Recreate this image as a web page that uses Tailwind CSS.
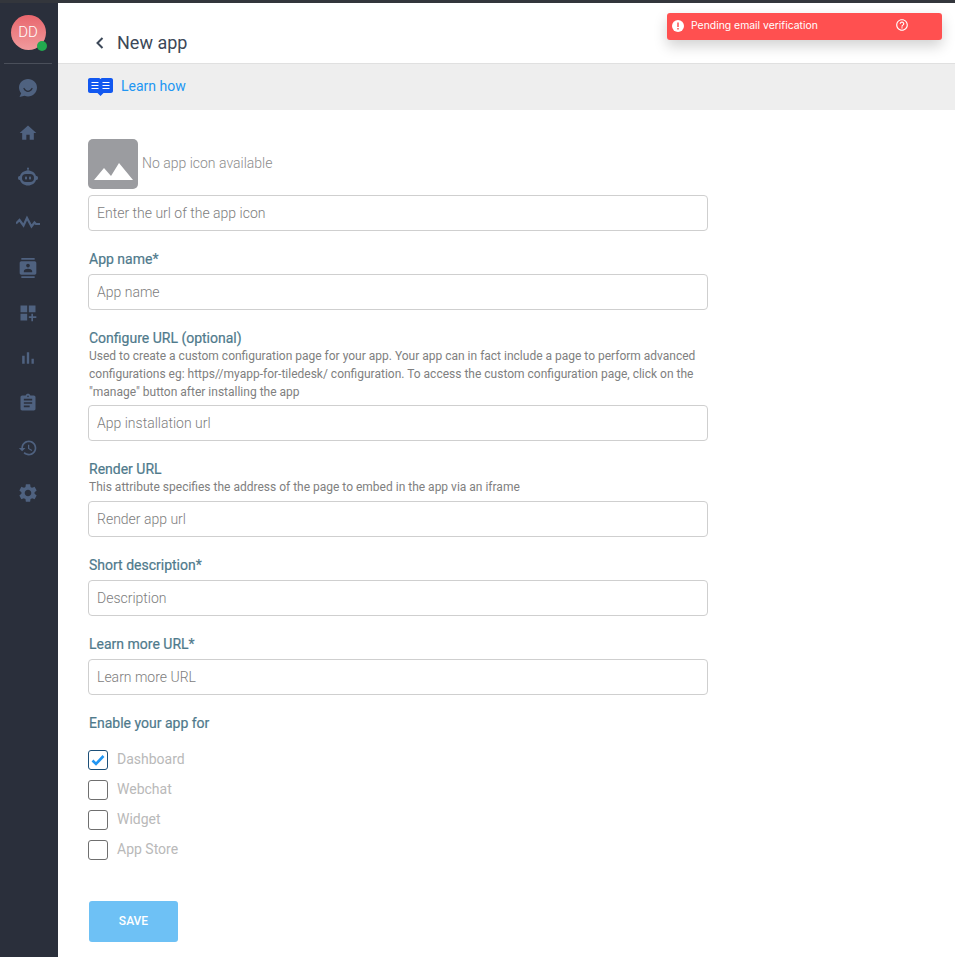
<!DOCTYPE html>
<html lang="en">
<head>
    <meta charset="UTF-8">
    <script src="https://cdn.jsdelivr.net/npm/@tailwindcss/browser@4"></script>
    <title>New app</title>
</head>
<body class="font-[Roboto,sans-serif]">
<div class="relative w-[955px] h-[957px] overflow-hidden bg-white flex flex-col">
    <div class="h-[3px] bg-[#33363c] shrink-0"></div>

    <div class="flex flex-1 min-h-0">
        <!-- sidebar -->
        <aside class="w-[58px] shrink-0 bg-[#2a2f3b] flex flex-col items-center">
            <div class="w-full h-[60px] shrink-0 flex items-center justify-center pr-[2px]">
                <div class="relative w-[35px] h-[35px] mt-[-2px] rounded-full bg-gradient-to-b from-[#e8666d] to-[#f09a9d] flex items-center justify-center text-white text-[15px] font-light">
                    DD
                    <span class="absolute right-[-1px] bottom-[-1px] w-[10px] h-[10px] rounded-full bg-[#22a94f]"></span>
                </div>
            </div>
            <div class="w-[48px] h-px bg-[#4a4f5a] shrink-0 mr-[2px]"></div>
            <nav class="flex flex-col items-center gap-[21px] mt-[12px] mr-[2px] text-[#4f6280]">
                <svg class="w-6 h-6" viewBox="0 0 24 24" fill="currentColor"><path d="M12 3c-5 0-9 3.700-9 8.500 0 2.200.8 4.200 2.200 5.700L3.500 21l5-1.200c1.100.4 2.300.7 3.500.7 5 0 9-3.800 9-8.900S17 3 12 3z"/><path d="M8 12.500c1 2 2.500 2.800 4 2.800s3-.8 4-2.800" fill="none" stroke="#2a2f3b" stroke-width="1.300" stroke-linecap="round"/></svg>
                <svg class="w-6 h-6 p-[2px]" viewBox="0 0 24 24" fill="currentColor"><path d="M10 20v-6h4v6h5v-8h3L12 3 2 12h3v8z"/></svg>
                <svg class="w-6 h-6" viewBox="0 0 24 24" fill="currentColor"><path d="M11.500 2h1v3h-1z"/><circle cx="12" cy="2.500" r="1"/><path d="M12 4.500c4 0 7 2.300 8 5.500h.5c1 0 1.500.8 1.500 2s-.5 2-1.500 2H20c-1 3.200-4 5.500-8 5.500S5 17.200 4 14h-.5C2.500 14 2 13.200 2 12s.5-2 1.500-2H4c1-3.200 4-5.500 8-5.500z"/><rect x="6" y="8" width="12" height="8" rx="4" fill="#2a2f3b"/><rect x="9" y="10.500" width="2" height="3" rx=".8"/><rect x="13" y="10.500" width="2" height="3" rx=".8"/></svg>
                <svg class="w-6 h-6" viewBox="0 0 24 24" fill="none" stroke="currentColor" stroke-width="2.200"><path d="M0 12.500l3.500-3.500 4 5.500L11 7l4.500 8.500 3-4 1.500 1.500h4"/></svg>
                <svg class="w-6 h-6 p-[2px]" viewBox="0 0 24 24" fill="currentColor"><path d="M20 0H4v2h16V0zM4 24h16v-2H4v2zM20 4H4c-1.100 0-2 .9-2 2v12c0 1.100.9 2 2 2h16c1.100 0 2-.9 2-2V6c0-1.100-.9-2-2-2zm-8 2.750c1.240 0 2.250 1.010 2.250 2.250s-1.010 2.250-2.250 2.250S9.750 10.240 9.750 9 10.760 6.750 12 6.750zM17 17H7v-1.500c0-1.670 3.330-2.500 5-2.500s5 .83 5 2.500V17z"/></svg>
                <svg class="w-6 h-6 p-[2px]" viewBox="0 0 24 24" fill="currentColor"><path d="M3 3h8v8H3zM13 3h8v8h-8zM3 13h8v8H3zM16 13h2v3h4v2h-4v4h-2v-4h-3v-2h3z"/></svg>
                <svg class="w-6 h-6 p-[2px]" viewBox="0 0 24 24" fill="currentColor"><path d="M5 9.200h3V19H5zM10.600 5h2.800v14h-2.800zm5.600 8H19v6h-2.800z"/></svg>
                <svg class="w-6 h-6 p-[2px]" viewBox="0 0 24 24" fill="currentColor"><path d="M19 3h-4.180C14.400 1.840 13.300 1 12 1c-1.300 0-2.400.84-2.820 2H5c-1.100 0-2 .9-2 2v14c0 1.100.9 2 2 2h14c1.100 0 2-.9 2-2V5c0-1.100-.9-2-2-2zm-7 0c.55 0 1 .45 1 1s-.45 1-1 1-1-.45-1-1 .45-1 1-1zm2 14H7v-2h7v2zm3-4H7v-2h10v2zm0-4H7V7h10v2z"/></svg>
                <svg class="w-6 h-6 p-[2px]" viewBox="0 0 24 24" fill="currentColor"><path d="M13 3c-4.970 0-9 4.030-9 9H1l3.890 3.890.07.14L9 12H6c0-3.870 3.130-7 7-7s7 3.130 7 7-3.130 7-7 7c-1.930 0-3.680-.79-4.940-2.060l-1.420 1.420C8.270 19.990 10.510 21 13 21c4.970 0 9-4.030 9-9s-4.030-9-9-9zm-1 5v5l4.280 2.540.72-1.210-3.500-2.080V8H12z"/></svg>
                <svg class="w-6 h-6 p-px" viewBox="0 0 24 24" fill="currentColor"><path d="M19.140 12.940c.04-.3.06-.61.06-.94 0-.32-.02-.64-.07-.94l2.030-1.580c.18-.14.23-.41.12-.61l-1.920-3.320c-.12-.22-.37-.29-.59-.22l-2.390.96c-.5-.38-1.030-.7-1.620-.94l-.36-2.540c-.04-.24-.24-.41-.48-.41h-3.840c-.24 0-.43.17-.47.41l-.36 2.540c-.59.24-1.130.57-1.620.94l-2.390-.96c-.22-.08-.47 0-.59.22L2.740 8.870c-.12.21-.08.47.12.61l2.030 1.580c-.05.3-.09.63-.09.94s.02.64.07.94l-2.030 1.580c-.18.14-.23.41-.12.61l1.920 3.320c.12.22.37.29.59.22l2.390-.96c.5.38 1.030.7 1.620.94l.36 2.540c.05.24.24.41.48.41h3.840c.24 0 .44-.17.47-.41l.36-2.540c.59-.24 1.130-.56 1.620-.94l2.390.96c.22.08.47 0 .59-.22l1.920-3.320c.12-.22.07-.47-.12-.61l-2.010-1.580zM12 15.600c-1.980 0-3.600-1.620-3.600-3.600s1.620-3.600 3.600-3.600 3.600 1.620 3.600 3.600-1.620 3.600-3.600 3.600z"/></svg>
            </nav>
        </aside>

        <main class="flex-1 min-w-0 flex flex-col">
            <div class="h-[61px] shrink-0 border-b border-[#e0e0e0] flex items-center pl-[33px] pt-[20px] gap-[8px] text-[#3c4858]">
                <svg class="w-[18px] h-[18px]" viewBox="0 0 18 18" fill="none" stroke="currentColor" stroke-width="2"><path d="M11.500 4l-5 5 5 5"/></svg>
                <span class="text-[18px] leading-[24px]">New app</span>
            </div>
            <div class="h-[46px] shrink-0 bg-[#eeeeee] flex items-center pl-[30px] gap-[8px]">
                <svg class="w-[25px] h-[20px]" viewBox="0 0 25 20"><path d="M2 1h8.500c1 0 1.500.5 2 1 .5-.5 1-1 2-1H23c1.100 0 2 .9 2 2v11c0 1.100-.9 2-2 2h-7.500l-3 3-3-3H2c-1.100 0-2-.9-2-2V3c0-1.100.9-2 2-2z" fill="#1258f0"/><path d="M3.500 5.500h7M3.500 8.500h7M3.500 11.500h7M14.500 5.500h7M14.500 8.500h7M14.500 11.500h7" stroke="#fff" stroke-width="1.100"/></svg>
                <span class="text-[14px] text-[#2196f3] mt-[-2px]">Learn how</span>
            </div>

            <form class="w-[620px] ml-[30px] mt-[29px] flex flex-col text-[14px]">
                <div class="flex items-center gap-[4px]">
                    <div class="w-[50px] h-[50px] rounded-[5px] bg-[#9b9ca0] flex items-end justify-center">
                        <svg class="w-[39px] h-[17px] mb-[9px]" viewBox="0 0 39 17" fill="#fff"><path d="M0 17L10 5l7 8L25 0l14 17z"/></svg>
                    </div>
                    <span class="text-[#8c8c8c] font-light mt-[-2px]">No app icon available</span>
                </div>
                <input class="mt-[6px] w-full h-[36px] px-[8px] border border-[#cfcfcf] rounded-[4px] placeholder:text-[#7d7d7d] font-light text-[14px]" placeholder="Enter the url of the app icon">

                <label class="mt-[18px] mb-[5px] ml-px leading-[20px] font-normal text-[#4f7a8c] [-webkit-text-stroke:0.2px_#4f7a8c]">App name*</label>
                <input class="w-full h-[36px] px-[8px] border border-[#cfcfcf] rounded-[4px] placeholder:text-[#7d7d7d] font-light text-[14px]" placeholder="App name">

                <label class="mt-[18px] ml-px leading-[20px] font-normal text-[#4f7a8c] [-webkit-text-stroke:0.2px_#4f7a8c]">Configure URL (optional)</label>
                <p class="mt-[-1px] mb-[4px] ml-px text-[12px] leading-[18px] text-[#808080]">Used to create a custom configuration page for your app. Your app can in fact include a page to perform advanced configurations eg: https//myapp-for-tiledesk/ configuration. To access the custom configuration page, click on the "manage" button after installing the app</p>
                <input class="w-full h-[36px] px-[8px] border border-[#cfcfcf] rounded-[4px] placeholder:text-[#7d7d7d] font-light text-[14px]" placeholder="App installation url">

                <label class="mt-[18px] ml-px leading-[20px] font-normal text-[#4f7a8c] [-webkit-text-stroke:0.2px_#4f7a8c]">Render URL</label>
                <p class="mt-[-1px] mb-[5px] ml-px text-[12px] leading-[18px] text-[#808080]">This attribute specifies the address of the page to embed in the app via an iframe</p>
                <input class="w-full h-[36px] px-[8px] border border-[#cfcfcf] rounded-[4px] placeholder:text-[#7d7d7d] font-light text-[14px]" placeholder="Render app url">

                <label class="mt-[18px] mb-[5px] ml-px leading-[20px] font-normal text-[#4f7a8c] [-webkit-text-stroke:0.2px_#4f7a8c]">Short description*</label>
                <input class="w-full h-[36px] px-[8px] border border-[#cfcfcf] rounded-[4px] placeholder:text-[#7d7d7d] font-light text-[14px]" placeholder="Description">

                <label class="mt-[18px] mb-[5px] ml-px leading-[20px] font-normal text-[#4f7a8c] [-webkit-text-stroke:0.2px_#4f7a8c]">Learn more URL*</label>
                <input class="w-full h-[36px] px-[8px] border border-[#cfcfcf] rounded-[4px] placeholder:text-[#7d7d7d] font-light text-[14px]" placeholder="Learn more URL">

                <label class="mt-[18px] mb-[17px] ml-px leading-[20px] font-normal text-[#4f7a8c] [-webkit-text-stroke:0.2px_#4f7a8c]">Enable your app for</label>

                <div class="flex flex-col gap-[10px] text-[#b9b9b9]">
                    <div class="flex items-center gap-[8px] h-[20px]">
                        <span class="w-[20px] h-[20px] rounded-[3px] border border-[#1c4f78] flex items-center justify-center">
                            <svg class="w-[14px] h-[14px]" viewBox="0 0 14 14" fill="none" stroke="#2196f3" stroke-width="2.600"><path d="M1.500 7.500l3.500 3.500 7.500-8"/></svg>
                        </span>
                        <span class="mt-[-2px] ml-[1px]">Dashboard</span>
                    </div>
                    <div class="flex items-center gap-[8px] h-[20px]">
                        <span class="w-[20px] h-[20px] rounded-[3px] border border-[#6f6f6f]"></span>
                        <span class="mt-[-2px] ml-[1px]">Webchat</span>
                    </div>
                    <div class="flex items-center gap-[8px] h-[20px]">
                        <span class="w-[20px] h-[20px] rounded-[3px] border border-[#6f6f6f]"></span>
                        <span class="mt-[-2px] ml-[1px]">Widget</span>
                    </div>
                    <div class="flex items-center gap-[8px] h-[20px]">
                        <span class="w-[20px] h-[20px] rounded-[3px] border border-[#6f6f6f]"></span>
                        <span class="mt-[-2px] ml-[1px]">App Store</span>
                    </div>
                </div>

                <button type="button" class="mt-[41px] ml-px w-[89px] h-[41px] pb-[2px] rounded-[3px] bg-[#6ec1f5] text-white text-[12px] font-medium">SAVE</button>
            </form>
        </main>
    </div>

    <!-- toast -->
    <div class="absolute left-[667px] top-[13px] w-[275px] h-[27px] rounded-[3px] bg-[#ff5050] shadow-[0_6px_14px_rgba(0,0,0,0.18)] flex items-center pl-[5px] text-white">
        <svg class="w-[12px] h-[12px] mt-[-2px]" viewBox="0 0 24 24"><circle cx="12" cy="12" r="12" fill="#fff"/><path d="M10.500 5h3v9h-3zM10.500 16h3v3h-3z" fill="#ff5050"/></svg>
        <span class="ml-[7px] mt-[-2px] text-[10.4px] font-[Inter,sans-serif]">Pending email verification</span>
        <svg class="absolute left-[228px] top-[5px] w-[14px] h-[14px]" viewBox="0 0 24 24" fill="currentColor"><path d="M11 18h2v-2h-2v2zm1-16C6.480 2 2 6.480 2 12s4.480 10 10 10 10-4.480 10-10S17.520 2 12 2zm0 18c-4.410 0-8-3.590-8-8s3.590-8 8-8 8 3.590 8 8-3.590 8-8 8zm0-14c-2.210 0-4 1.790-4 4h2c0-1.100.9-2 2-2s2 .9 2 2c0 2-3 1.750-3 5h2c0-2.250 3-2.500 3-5 0-2.210-1.790-4-4-4z"/></svg>
    </div>
</div>
</body>
</html>
